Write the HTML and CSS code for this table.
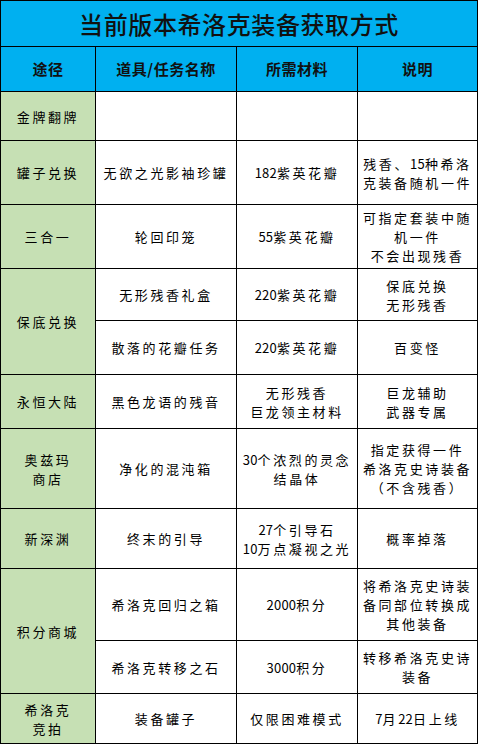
FILE: index.html
```html
<!DOCTYPE html>
<html lang="zh">
<head>
<meta charset="utf-8">
<link rel="stylesheet" href="styles.css">
</head>
<body>
<table class="tbl">
  <colgroup>
    <col class="c1"><col class="c2"><col class="c3"><col class="c4">
  </colgroup>
  <tr class="r-title"><td colspan="4" class="title">当前版本希洛克装备获取方式</td></tr>
  <tr class="r-head">
    <th>途径</th><th>道具/任务名称</th><th>所需材料</th><th>说明</th>
  </tr>
  <tr class="h49"><td class="way">金牌翻牌</td><td></td><td></td><td></td></tr>
  <tr class="h64"><td class="way">罐子兑换</td><td>无欲之光影袖珍罐</td><td><span class="num">182</span>紫英花瓣</td><td>残香、<span class="num">15</span>种希洛<br>克装备随机一件</td></tr>
  <tr class="h64"><td class="way">三合一</td><td>轮回印笼</td><td><span class="num">55</span>紫英花瓣</td><td>可指定套装中随<br>机一件<br>不会出现残香</td></tr>
  <tr class="h52"><td class="way" rowspan="2">保底兑换</td><td>无形残香礼盒</td><td><span class="num">220</span>紫英花瓣</td><td>保底兑换<br>无形残香</td></tr>
  <tr class="h54"><td>散落的花瓣任务</td><td><span class="num">220</span>紫英花瓣</td><td>百变怪</td></tr>
  <tr class="h54"><td class="way">永恒大陆</td><td>黑色龙语的残音</td><td>无形残香<br>巨龙领主材料</td><td>巨龙辅助<br>武器专属</td></tr>
  <tr class="h80"><td class="way">奥兹玛<br>商店</td><td>净化的混沌箱</td><td><span class="num">30</span>个浓烈的灵念<br>结晶体</td><td>指定获得一件<br>希洛克史诗装备<br>（不含残香）</td></tr>
  <tr class="h60"><td class="way">新深渊</td><td>终末的引导</td><td><span class="num">27</span>个引导石<br><span class="num">10</span>万点凝视之光</td><td>概率掉落</td></tr>
  <tr class="h72"><td class="way" rowspan="2">积分商城</td><td>希洛克回归之箱</td><td><span class="num">2000</span>积分</td><td>将希洛克史诗装<br>备同部位转换成<br>其他装备</td></tr>
  <tr class="h53"><td>希洛克转移之石</td><td><span class="num">3000</span>积分</td><td>转移希洛克史诗<br>装备</td></tr>
  <tr class="h50"><td class="way">希洛克<br>竞拍</td><td>装备罐子</td><td>仅限困难模式</td><td><span class="num">7</span>月<span class="num">22</span>日上线</td></tr>
</table>
</body>
</html>
```
FILE: styles.css
```css
html, body {
  margin: 0;
  padding: 0;
  background: #ffffff;
}
.tbl {
  border-collapse: collapse;
  table-layout: fixed;
  width: 477px;
  font-family: "Noto Sans CJK SC", "Noto Sans", sans-serif;
  color: #000;
}
.c1 { width: 95px; }
.c2 { width: 141px; }
.c3 { width: 121px; }
.c4 { width: 120px; }
.tbl td, .tbl th {
  border: 1px solid #000;
  padding: 0;
  text-align: center;
  vertical-align: middle;
  white-space: nowrap;
  overflow: hidden;
}
.tbl td {
  font-size: 13px;
  line-height: 19px;
  letter-spacing: 2.6px;
  background: #fff;
}
.num {
  letter-spacing: 0.2px;
}
.tbl td.way {
  background: #c6e0b4;
}
.r-title { height: 46px; }
.tbl td.title {
  background: #00b0f0;
  font-size: 24px;
  line-height: 36px;
  letter-spacing: 0.6px;
  color: #111;
  font-weight: 500;
}
.r-head { height: 45px; }
.tbl th {
  background: #00b0f0;
  font-size: 15px;
  line-height: 22px;
  font-weight: 700;
  letter-spacing: 0.5px;
  color: #111;
}
.h49 { height: 49px; }
.h50 { height: 50px; }
.h52 { height: 52px; }
.h53 { height: 53px; }
.h54 { height: 54px; }
.h60 { height: 60px; }
.h64 { height: 64px; }
.h72 { height: 72px; }
.h80 { height: 80px; }
```
